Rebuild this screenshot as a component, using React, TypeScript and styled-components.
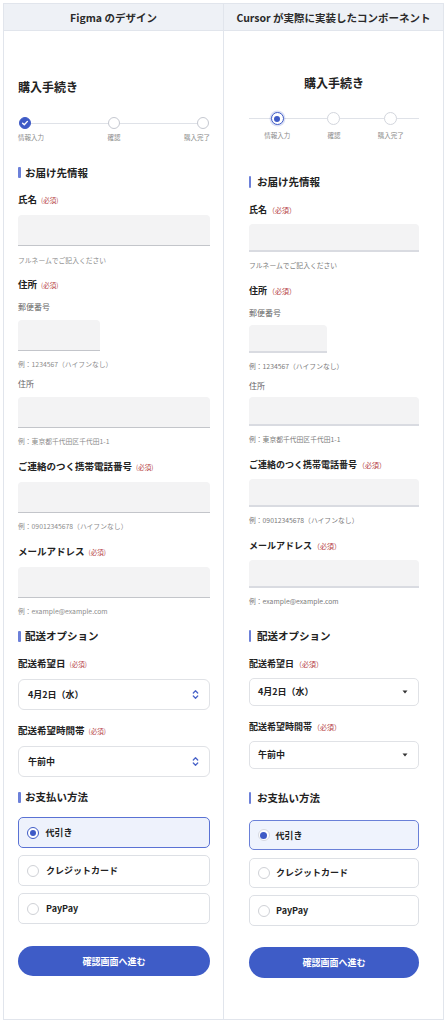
import React from "react";
import styled, { createGlobalStyle, css } from "styled-components";

type V = "figma" | "cursor";

const GlobalStyle = createGlobalStyle`
  * { box-sizing: border-box; }
  html, body { margin: 0; padding: 0; background: #fff; }
  body {
    font-family: "Noto Sans CJK JP", "Noto Sans", sans-serif;
    color: #222;
  }
`;

const Frame = styled.div`
  margin: 3px 0 0 3px;
  width: 441px;
  height: 1017px;
  border: 1px solid #e1e5ec;
  display: grid;
  grid-template-columns: 219px 1fr;
`;

const Column = styled.section<{ $v: V }>`
  display: flex;
  flex-direction: column;
  min-width: 0;
  ${(p) =>
    p.$v === "cursor" &&
    css`
      border-left: 1px solid #e1e5ec;
    `}
`;

const Header = styled.div`
  height: 27px;
  flex: none;
  background: #eef1f6;
  border-bottom: 1px solid #e1e5ec;
  display: flex;
  align-items: center;
  justify-content: center;
  font-size: 10.5px;
  font-weight: 700;
  color: #2a2a2a;
`;

const Body = styled.div<{ $v: V }>`
  flex: 1;
  display: flex;
  flex-direction: column;
  padding: ${(p) => (p.$v === "figma" ? "0 13px 0 14px" : "0 24px 0 25px")};
`;

const Title = styled.h1<{ $v: V }>`
  margin: ${(p) => (p.$v === "figma" ? "48px 0 0" : "44px 0 0")};
  font-size: 12px;
  line-height: 16px;
  font-weight: 700;
  color: #222;
  text-align: ${(p) => (p.$v === "figma" ? "left" : "center")};
`;

const Steps = styled.div<{ $v: V }>`
  position: relative;
  margin-top: ${(p) => (p.$v === "figma" ? "22px" : "21px")};
  margin-bottom: ${(p) => (p.$v === "figma" ? "10px" : "12.5px")};
  ${(p) =>
    p.$v === "figma"
      ? css`
          display: flex;
          justify-content: space-between;
        `
      : css`
          display: grid;
          grid-template-columns: repeat(3, 1fr);
        `}
  &::before {
    content: "";
    position: absolute;
    left: ${(p) => (p.$v === "figma" ? "7px" : "0")};
    right: ${(p) => (p.$v === "figma" ? "6px" : "0")};
    top: 6px;
    height: 1px;
    background: #dfe2e8;
  }
`;

const Step = styled.div<{ $align: "flex-start" | "center" | "flex-end" }>`
  position: relative;
  z-index: 1;
  display: flex;
  flex-direction: column;
  align-items: ${(p) => p.$align};
`;

const Dot = styled.span<{ $v: V; $state: "done" | "current" | "todo" }>`
  display: flex;
  align-items: center;
  justify-content: center;
  border-radius: 50%;
  background: #fff;
  ${(p) =>
    p.$v === "figma"
      ? css`
          width: 12px;
          height: 12px;
          margin: 0 1px;
          border: 1px solid #c5c8d0;
        `
      : css`
          width: 13px;
          height: 13px;
          border: 1px solid #d3d6dd;
        `}
  ${(p) =>
    p.$state === "done" &&
    css`
      background: #3f5bc6;
      border-color: #3f5bc6;
    `}
  ${(p) =>
    p.$state === "current" &&
    css`
      border: 1.5px solid #3f5bc6;
      box-shadow: 0 0 0 1.5px rgba(63, 91, 198, 0.18);
      &::after {
        content: "";
        width: 6px;
        height: 6px;
        border-radius: 50%;
        background: #3f5bc6;
      }
    `}
`;

const StepLabel = styled.span<{ $v: V }>`
  margin-top: ${(p) => (p.$v === "figma" ? "3px" : "5px")};
  font-size: 6.5px;
  line-height: 10px;
  color: #8a8a8a;
  white-space: nowrap;
`;

const SectionTitle = styled.h2<{ $v: V }>`
  margin: ${(p) => (p.$v === "figma" ? "13.5px 0 0" : "22.5px 0 0")};
  display: flex;
  align-items: center;
  gap: ${(p) => (p.$v === "figma" ? "4px" : "6px")};
  font-size: 10.5px;
  line-height: 14px;
  font-weight: 700;
  color: #222;
  &::before {
    content: "";
    flex: none;
    width: ${(p) => (p.$v === "figma" ? "3px" : "2px")};
    height: ${(p) => (p.$v === "figma" ? "11px" : "12px")};
    background: #6c80d9;
    border-radius: 1px;
  }
`;

const Field = styled.div<{ $v: V }>`
  margin-top: ${(p) => (p.$v === "figma" ? "12.75px" : "14px")};
  display: flex;
  flex-direction: column;
  align-items: flex-start;
`;

const Label = styled.div<{ $v: V }>`
  display: flex;
  align-items: baseline;
  font-size: ${(p) => (p.$v === "figma" ? "9.5px" : "9px")};
  line-height: 14px;
  font-weight: 700;
  color: #222;
`;

const Required = styled.span<{ $v: V }>`
  margin-left: ${(p) => (p.$v === "figma" ? "4px" : "1px")};
  font-size: ${(p) => (p.$v === "figma" ? "6.5px" : "7px")};
  font-weight: 400;
  color: #b5403f;
`;

const SubLabel = styled.div`
  margin-top: 9.5px;
  font-size: 8px;
  line-height: 10px;
  color: #666;
`;

const TextBox = styled.input<{ $v: V; $w?: number }>`
  display: block;
  margin: ${(p) => (p.$v === "figma" ? "8px 0 0" : "6.75px 0 0")};
  width: ${(p) => (p.$w ? `${p.$w}px` : "100%")};
  height: ${(p) => (p.$v === "figma" ? "31px" : "28.5px")};
  padding: 0 8px;
  border: 0;
  border-bottom: ${(p) => (p.$v === "figma" ? "1px solid #c3c5ca" : "2px solid #d9dbe1")};
  border-radius: 4px 4px 0 0;
  background: #f3f3f4;
  font: inherit;
  outline: none;
`;

const Helper = styled.div<{ $v: V }>`
  margin-top: ${(p) => (p.$v === "figma" ? "8.25px" : "8px")};
  font-size: 6.8px;
  line-height: 10px;
  color: ${(p) => (p.$v === "figma" ? "#8b8b8b" : "#7a7a7a")};
  white-space: nowrap;
`;

const SelectBox = styled.div<{ $v: V }>`
  margin-top: ${(p) => (p.$v === "figma" ? "8px" : "6.75px")};
  width: 100%;
  height: ${(p) => (p.$v === "figma" ? "31px" : "28.3px")};
  display: flex;
  align-items: center;
  justify-content: space-between;
  padding: ${(p) => (p.$v === "figma" ? "0 10px 0 9px" : "0 10px 0 8px")};
  background: #fff;
  border: 1px solid #e0e2e6;
  border-radius: ${(p) => (p.$v === "figma" ? "6px" : "5px")};
  font-size: 9px;
  font-weight: 700;
  color: #222;
`;

const RadioList = styled.div<{ $v: V }>`
  margin-top: ${(p) => (p.$v === "figma" ? "13px" : "14.5px")};
  display: flex;
  flex-direction: column;
  gap: ${(p) => (p.$v === "figma" ? "7.5px" : "7.3px")};
`;

const RadioCard = styled.label<{ $v: V; $on: boolean }>`
  height: 30.5px;
  display: flex;
  align-items: center;
  gap: ${(p) => (p.$v === "figma" ? "7px" : "6px")};
  padding-left: 8px;
  border: 1px solid #dde0e5;
  border-radius: 5px;
  background: #fff;
  font-size: 9px;
  font-weight: 700;
  color: #222;
  ${(p) =>
    p.$on &&
    css`
      border: 1.5px solid ${p.$v === "figma" ? "#5a72d4" : "#6a80d8"};
      padding-left: 7.5px;
      background: ${p.$v === "figma" ? "#eef2fc" : "#eff3fd"};
    `}
`;

const RadioMark = styled.span<{ $v: V; $on: boolean }>`
  flex: none;
  width: 12px;
  height: 12px;
  border-radius: 50%;
  background: #fff;
  border: 1px solid #cfd1d6;
  display: flex;
  align-items: center;
  justify-content: center;
  ${(p) =>
    p.$on &&
    (p.$v === "figma"
      ? css`
          border: 1.5px solid #3f5bc6;
          &::after {
            content: "";
            width: 6px;
            height: 6px;
            border-radius: 50%;
            background: #3f5bc6;
          }
        `
      : css`
          border: 1.5px solid #d6d9e2;
          &::after {
            content: "";
            width: 7px;
            height: 7px;
            border-radius: 50%;
            background: #3f5bc6;
          }
        `)}
`;

const SubmitButton = styled.button<{ $v: V }>`
  margin-top: ${(p) => (p.$v === "figma" ? "22px" : "21.5px")};
  width: 100%;
  height: 30.5px;
  border: 0;
  border-radius: 16px;
  background: #3e5cc7;
  color: #fff;
  font-family: inherit;
  font-size: 9px;
  font-weight: 700;
  cursor: pointer;
`;

const UpDown = () => (
  <svg width="7" height="11" viewBox="0 0 7 11" fill="none" stroke="#4a64c9" strokeWidth="1.3" strokeLinecap="round" strokeLinejoin="round">
    <path d="M1.3 4 L3.5 1.8 L5.7 4" />
    <path d="M1.3 7 L3.5 9.2 L5.7 7" />
  </svg>
);

const Caret = () => (
  <svg width="6" height="4" viewBox="0 0 6 4">
    <path d="M0.5 0.5 L5.5 0.5 L3 3.5 Z" fill="#333" />
  </svg>
);

const Check = () => (
  <svg width="8" height="8" viewBox="0 0 8 8" fill="none" stroke="#fff" strokeWidth="1.4" strokeLinecap="round" strokeLinejoin="round">
    <path d="M1.6 4.2 L3.3 5.8 L6.4 2.4" />
  </svg>
);

const req = (v: V) => (v === "figma" ? "(必須)" : "（必須）");

const CheckoutForm: React.FC<{ v: V; heading: string }> = ({ v, heading }) => {
  const steps: { label: string; state: "done" | "current" | "todo" }[] = [
    { label: "情報入力", state: v === "figma" ? "done" : "current" },
    { label: "確認", state: "todo" },
    { label: "購入完了", state: "todo" },
  ];
  const aligns: ("flex-start" | "center" | "flex-end")[] =
    v === "figma" ? ["flex-start", "center", "flex-end"] : ["center", "center", "center"];
  const payments = ["代引き", "クレジットカード", "PayPay"];

  return (
    <Column $v={v}>
      <Header>{heading}</Header>
      <Body $v={v}>
        <Title $v={v}>購入手続き</Title>
        <Steps $v={v}>
          {steps.map((s, i) => (
            <Step key={s.label} $align={aligns[i]}>
              <Dot $v={v} $state={s.state}>
                {s.state === "done" && <Check />}
              </Dot>
              <StepLabel $v={v}>{s.label}</StepLabel>
            </Step>
          ))}
        </Steps>

        <SectionTitle $v={v}>お届け先情報</SectionTitle>
        <Field $v={v}>
          <Label $v={v}>
            氏名<Required $v={v}>{req(v)}</Required>
          </Label>
          <TextBox $v={v} />
          <Helper $v={v}>フルネームでご記入ください</Helper>
        </Field>
        <Field $v={v}>
          <Label $v={v}>
            住所<Required $v={v}>{req(v)}</Required>
          </Label>
          <SubLabel>郵便番号</SubLabel>
          <TextBox $v={v} $w={v === "figma" ? 82 : 78} />
          <Helper $v={v}>例：1234567（ハイフンなし）</Helper>
          <SubLabel>住所</SubLabel>
          <TextBox $v={v} />
          <Helper $v={v}>例：東京都千代田区千代田1-1</Helper>
        </Field>
        <Field $v={v}>
          <Label $v={v}>
            ご連絡のつく携帯電話番号<Required $v={v}>{req(v)}</Required>
          </Label>
          <TextBox $v={v} />
          <Helper $v={v}>例：09012345678（ハイフンなし）</Helper>
        </Field>
        <Field $v={v}>
          <Label $v={v}>
            メールアドレス<Required $v={v}>{req(v)}</Required>
          </Label>
          <TextBox $v={v} />
          <Helper $v={v}>例：example@example.com</Helper>
        </Field>

        <SectionTitle $v={v}>配送オプション</SectionTitle>
        <Field $v={v}>
          <Label $v={v}>
            配送希望日<Required $v={v}>{req(v)}</Required>
          </Label>
          <SelectBox $v={v}>
            <span>4月2日（水）</span>
            {v === "figma" ? <UpDown /> : <Caret />}
          </SelectBox>
        </Field>
        <Field $v={v}>
          <Label $v={v}>
            配送希望時間帯<Required $v={v}>{req(v)}</Required>
          </Label>
          <SelectBox $v={v}>
            <span>午前中</span>
            {v === "figma" ? <UpDown /> : <Caret />}
          </SelectBox>
        </Field>

        <SectionTitle $v={v}>お支払い方法</SectionTitle>
        <RadioList $v={v}>
          {payments.map((p, i) => (
            <RadioCard key={p} $v={v} $on={i === 0}>
              <RadioMark $v={v} $on={i === 0} />
              {p}
            </RadioCard>
          ))}
        </RadioList>
        <SubmitButton $v={v}>確認画面へ進む</SubmitButton>
      </Body>
    </Column>
  );
};

export default function App() {
  return (
    <>
      <GlobalStyle />
      <Frame>
        <CheckoutForm v="figma" heading="Figma のデザイン" />
        <CheckoutForm v="cursor" heading="Cursor が実際に実装したコンポーネント" />
      </Frame>
    </>
  );
}
